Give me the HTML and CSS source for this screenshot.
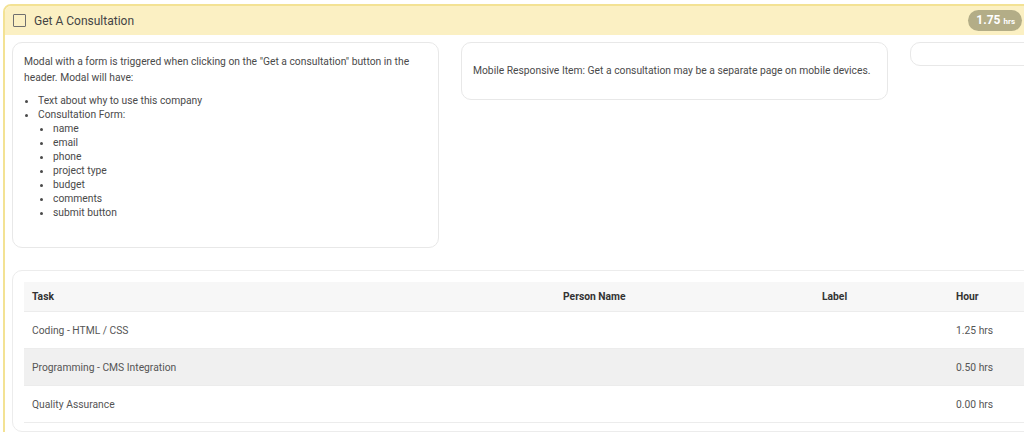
FILE: index.html
```html
<!DOCTYPE html>
<html>
<head>
<meta charset="utf-8">
<link rel="stylesheet" href="styles.css">
</head>
<body>
<div class="section">
  <div class="section-head">
    <span class="checkbox"></span>
    <span class="title">Get A Consultation</span>
    <span class="badge">1.75 <small>hrs</small></span>
  </div>
  <div class="section-body">
    <div class="cards">
      <div class="card card-main">
        <p class="lead">Modal with a form is triggered when clicking on the "Get a consultation" button in the header. Modal will have:</p>
        <ul class="list">
          <li>Text about why to use this company</li>
          <li>Consultation Form:
            <ul class="sublist">
              <li>name</li>
              <li>email</li>
              <li>phone</li>
              <li>project type</li>
              <li>budget</li>
              <li>comments</li>
              <li>submit button</li>
            </ul>
          </li>
        </ul>
      </div>
      <div class="card card-note">
        <p class="note">Mobile Responsive Item: Get a consultation may be a separate page on mobile devices.</p>
      </div>
      <div class="card card-empty"></div>
    </div>
    <div class="table-card">
      <table class="tasks">
        <colgroup>
          <col class="c-task"><col class="c-person"><col class="c-label"><col class="c-hour">
        </colgroup>
        <thead>
          <tr><th>Task</th><th>Person Name</th><th>Label</th><th>Hour</th></tr>
        </thead>
        <tbody>
          <tr><td>Coding - HTML / CSS</td><td></td><td></td><td>1.25 hrs</td></tr>
          <tr class="alt"><td>Programming - CMS Integration</td><td></td><td></td><td>0.50 hrs</td></tr>
          <tr><td>Quality Assurance</td><td></td><td></td><td>0.00 hrs</td></tr>
        </tbody>
      </table>
    </div>
  </div>
</div>
</body>
</html>
```

FILE: styles.css
```css
html, body {
  margin: 0;
  padding: 0;
  background: #ffffff;
  overflow: hidden;
  font-family: Roboto, "Liberation Sans", Arial, sans-serif;
  color: #444;
}

.section {
  margin: 4px 0 0 3px;
  width: 1040px;
  border: 2px solid #f3e294;
  border-radius: 8px 8px 0 0;
  background: #fff;
  height: 440px;
  box-sizing: border-box;
}

.section-head {
  display: flex;
  align-items: center;
  height: 29px;
  padding: 0 19px 0 7px;
  background: #fbf0c3;
  border-radius: 6px 6px 0 0;
}

.checkbox {
  width: 11px;
  height: 11px;
  border: 1.6px solid #6f6f6f;
  border-radius: 1px;
  margin-right: 8px;
  margin-left: 1px;
}

.title {
  font-size: 12px;
  color: #444;
  flex: 1;
}

.badge {
  background: #b3ad87;
  color: #fff;
  font-weight: 700;
  font-size: 12px;
  height: 21px;
  line-height: 21px;
  padding: 0 7px 0 8px;
  border-radius: 11px;
  white-space: nowrap;
}

.badge small {
  font-size: 8px;
  font-weight: 700;
}

.section-body {
  padding: 7px 0 0 7px;
}

.cards {
  display: flex;
  align-items: flex-start;
  gap: 22px;
}

.card {
  flex: 0 0 427px;
  box-sizing: border-box;
  border: 1px solid #e8e8e8;
  border-radius: 10px;
  padding: 10px 11px;
  font-size: 10.3px;
  color: #4a4a4a;
}

.card-main {
  padding-top: 11px;
  padding-bottom: 11px;
}

.card-empty {
  height: 24px;
}

.lead {
  margin: 0 0 8px;
  line-height: 16px;
}

.note {
  margin: 10px 0;
  line-height: 16px;
}

.list {
  margin: 0 0 16px;
  padding-left: 14px;
  line-height: 14px;
}

.sublist {
  margin: 0;
  padding-left: 15px;
  list-style: disc;
}

.table-card {
  margin-top: 22px;
  width: 1100px;
  border: 1px solid #ececec;
  border-radius: 10px;
  padding: 11px 11px 8px;
}

.tasks {
  width: 1080px;
  border-collapse: collapse;
  table-layout: fixed;
  font-size: 10.3px;
}

.c-task { width: 531px; }
.c-person { width: 259px; }
.c-label { width: 134px; }
.c-hour { width: auto; }

.tasks th {
  text-align: left;
  font-weight: 700;
  color: #333;
  background: #f7f7f7;
  height: 29px;
  padding: 0 8px;
  border-bottom: 1px solid #ececec;
}

.tasks td {
  height: 36px;
  padding: 0 8px;
  color: #555;
  border-bottom: 1px solid #ececec;
  background: #fff;
}

.tasks tr.alt td {
  background: #f0f0f0;
}
```
